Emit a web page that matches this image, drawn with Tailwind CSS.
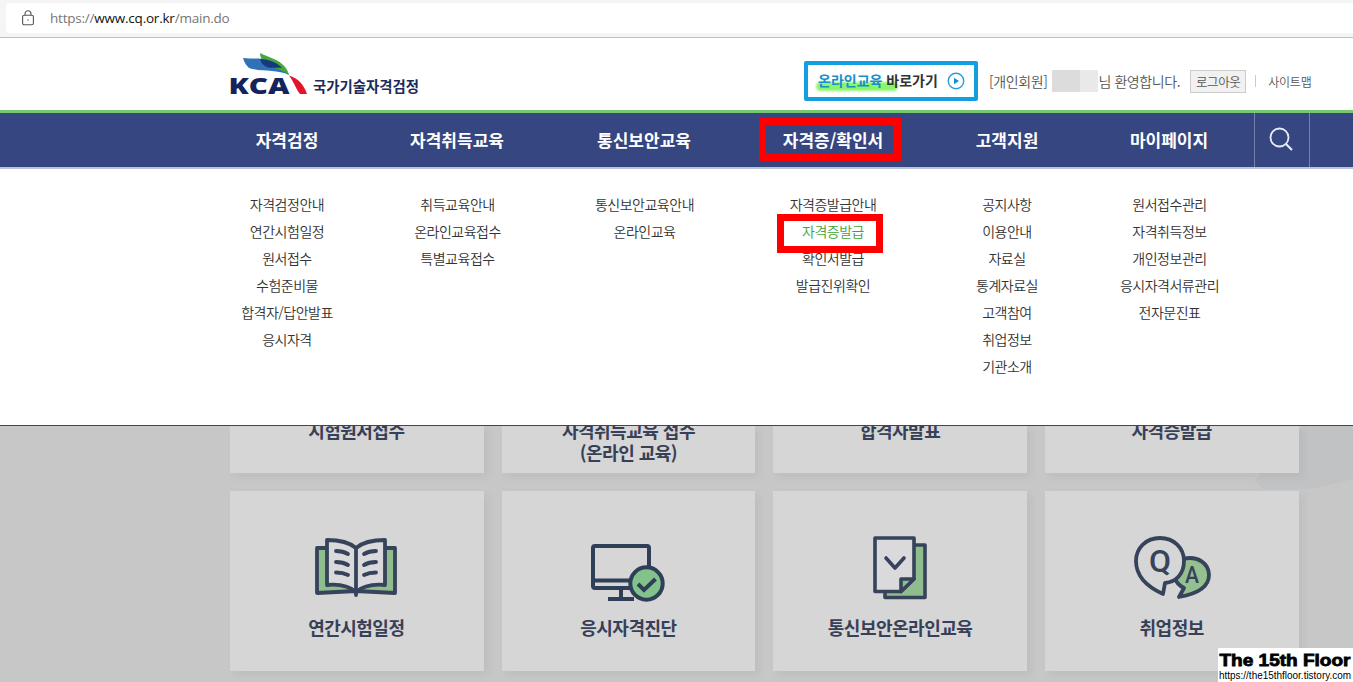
<!DOCTYPE html>
<html lang="ko">
<head>
    <meta charset="UTF-8">
    <meta name="viewport" content="width=device-width, initial-scale=1.0">
    <title>KCA 국가기술자격검정</title>
    <script src="https://cdn.jsdelivr.net/npm/@tailwindcss/browser@4"></script>
</head>
<body class="w-[1353px] h-[682px] overflow-hidden relative bg-white font-['Noto_Sans_CJK_KR',sans-serif] text-[#333] flex flex-col whitespace-nowrap">
    <!-- Address bar -->
    <div class="h-[38px] shrink-0 bg-[#f5f5f5] border-b border-[#bfbfbf] pt-[3px] pb-1 pl-1.5">
        <div class="h-full bg-white rounded-l flex items-center pl-4 font-['Open_Sans',sans-serif] text-[13.5px] tracking-[-0.22px] text-[#767676]">
            <svg class="w-3 h-4 mr-4" viewBox="0 0 12 16" fill="none" stroke="#555" stroke-width="1.1">
                <rect x="0.6" y="5.2" width="10.8" height="9.6" rx="1.6"/>
                <path d="M3 5.2V3.7a3 3 0 0 1 6 0v1.5"/>
                <circle cx="6" cy="10" r="0.7" fill="#555" stroke="none"/>
            </svg>
            <span>https://<span class="text-[#111]">www.cq.or.kr</span>/main.do</span>
        </div>
    </div>

    <!-- Header -->
    <header class="h-[72px] shrink-0 flex items-start pl-[229px]">
        <svg class="w-[192px] h-[48px] mt-3" viewBox="0 0 192 48">
            <path d="M14 8C22 9 32 8 40 10C50 13 57 18 60 25C48 19 32 22 20 18C17 15 15 12 14 8Z" fill="#2f72b8"/>
            <path d="M31 3C39 7 48 9 53 14C57 17 59 21 60 25C53 19 43 18 37 14C33 11 31 7 31 3Z" fill="#44a83c"/>
            <path d="M31 9C38 9 48 12 53 18C47 17 40 19 36 16C33 14 32 12 31 9Z" fill="#17387c"/>
            <path d="M60 25.500C69 28 75 35 78 44H71C67 39 65 32 60 25.500Z" fill="#e4142c"/>
            <text x="-0.500" y="44" textLength="61" lengthAdjust="spacingAndGlyphs" font-family="Open Sans, sans-serif" font-weight="800" font-size="23" fill="#14235c">KCA</text>
            <text x="84" y="42" textLength="106" lengthAdjust="spacingAndGlyphs" font-family="Noto Sans CJK KR, sans-serif" font-weight="700" font-size="15" fill="#1c2a5e">국가기술자격검정</text>
        </svg>
        <a class="ml-[383px] mt-[23px] w-[174px] h-[40px] border-4 border-[#119fdf] rounded-xs flex items-center pl-[10px] text-[14px] font-bold">
            <span class="relative -mt-0.5"><span class="absolute -left-0.5 top-[12px] w-[82px] h-[9px] rounded-full bg-[#8bf56a] blur-[1px]"></span><span class="relative"><span class="text-[#178fcb]">온라인교육</span> 바로가기</span></span>
            <svg class="w-[18px] h-[18px] ml-[9px]" viewBox="0 0 18 18">
                <circle cx="9" cy="9" r="7.700" fill="none" stroke="#2b9bd9" stroke-width="1.400"/>
                <path d="M7 5.800L12 9L7 12.200Z" fill="#178fcb"/>
            </svg>
        </a>
        <div class="flex items-center mt-[31px] h-6 ml-[11px] text-[14px] text-[#555] font-[350] tracking-[-0.4px]">
            <span>[개인회원]</span>
            <span class="flex ml-[5px] h-[22px]"><span class="w-7 bg-[#dcdcdc]"></span><span class="w-[18px] bg-[#e9e9e9]"></span></span>
            <span>님 환영합니다.</span>
            <a class="ml-[10px] w-[56px] h-[23px] bg-[#f1f1f1] border border-[#ccc] text-[12.5px] text-center leading-[21px]">로그아웃</a>
            <span class="w-px h-3 bg-[#ccc] ml-[9px] mr-3"></span>
            <a class="text-[12px] mt-0.5 tracking-[-0.2px]">사이트맵</a>
        </div>
    </header>

    <!-- Main menu -->
    <nav class="h-[59px] shrink-0 bg-[#354680] border-t-3 border-t-[#76c76f] border-b-2 border-b-[#bcc2d8] flex pl-[222px] text-white text-[17px] font-bold leading-[54px] text-center">
        <a class="w-[130px]">자격검정</a>
        <a class="w-[210px]">자격취득교육</a>
        <a class="w-[164px]">통신보안교육</a>
        <a class="w-[214px] relative">자격증/확인서<span class="absolute left-[33px] top-[5px] w-[142px] h-[43px] border-7 border-[#f00]"></span></a>
        <a class="w-[134px]">고객지원</a>
        <a class="w-[190px] -mr-[10px]">마이페이지</a>
        <a class="w-[56px] border-x border-[#7681aa] flex items-center justify-center pr-0.5">
            <svg class="w-6 h-6 -mt-0.5" viewBox="0 0 24 24" fill="none" stroke="#e8ebf5" stroke-width="1.800">
                <circle cx="10.500" cy="10.500" r="9"/>
                <path d="M17 17L23 23" stroke-width="2.200"/>
            </svg>
        </a>
    </nav>

    <!-- Sub menu -->
    <div class="h-[257px] shrink-0 border-b border-[#33467c] flex pl-[222px] pt-[22px] text-[14px] tracking-[-0.5px] leading-[27px] font-[350] text-center">
        <ul class="w-[130px]">
            <li>자격검정안내</li>
            <li>연간시험일정</li>
            <li>원서접수</li>
            <li>수험준비물</li>
            <li>합격자/답안발표</li>
            <li>응시자격</li>
        </ul>
        <ul class="w-[211px]">
            <li>취득교육안내</li>
            <li>온라인교육접수</li>
            <li>특별교육접수</li>
        </ul>
        <ul class="w-[163px]">
            <li>통신보안교육안내</li>
            <li>온라인교육</li>
        </ul>
        <ul class="w-[214px]">
            <li>자격증발급안내</li>
            <li class="relative text-[#3fa535]">자격증발급<span class="absolute left-[51px] -top-[4px] w-[106px] h-[39px] border-7 border-[#f00]"></span></li>
            <li>확인서발급</li>
            <li>발급진위확인</li>
        </ul>
        <ul class="w-[134px]">
            <li>공지사항</li>
            <li>이용안내</li>
            <li>자료실</li>
            <li>통계자료실</li>
            <li>고객참여</li>
            <li>취업정보</li>
            <li>기관소개</li>
        </ul>
        <ul class="w-[191px]">
            <li>원서접수관리</li>
            <li>자격취득정보</li>
            <li>개인정보관리</li>
            <li>응시자격서류관리</li>
            <li>전자문진표</li>
        </ul>
    </div>

    <!-- Quick links, dimmed behind the open menu -->
    <main class="relative h-[256px] overflow-hidden bg-[#c7c7c7] pl-[230px] text-[18px] leading-[22px] tracking-[-0.5px] font-bold text-[#384057] text-center">
        <svg class="absolute right-0 top-0 w-[110px] h-[70px]" viewBox="0 0 110 70">
            <path d="M12 54L60 0H110V53C92 58 74 63 56 63H20Z" fill="#c0c2c4"/>
        </svg>
        <div class="relative w-[1068.500px] grid grid-cols-4 grid-rows-[47px_180px] gap-[18px]">
            <div class="bg-[#d6d6d6] shadow-[4px_4px_8px_rgba(0,0,0,0.05)] overflow-hidden"><p class="-mt-[7px] pr-px">시험원서접수</p></div>
            <div class="bg-[#d6d6d6] shadow-[4px_4px_8px_rgba(0,0,0,0.05)] overflow-hidden"><p class="-mt-[7px]">자격취득교육 접수<br>(온라인 교육)</p></div>
            <div class="bg-[#d6d6d6] shadow-[4px_4px_8px_rgba(0,0,0,0.05)] overflow-hidden"><p class="-mt-[7px]">합격자발표</p></div>
            <div class="bg-[#d6d6d6] shadow-[4px_4px_8px_rgba(0,0,0,0.05)] overflow-hidden"><p class="-mt-[7px]">자격증발급</p></div>

            <div class="bg-[#d6d6d6] shadow-[4px_4px_8px_rgba(0,0,0,0.05)] flex flex-col items-center pt-[43px] pr-px">
                <svg class="w-[84px] h-[66px]" viewBox="0 0 84 66" fill="none" stroke="#36435b" stroke-width="3.800" stroke-linejoin="round" stroke-linecap="round">
                    <path d="M3 14H81V59L42 57L3 59Z" fill="#8fbd8d"/>
                    <path d="M13 6C25 6 35 8 42 14C49 8 59 6 71 6V51C60 50 49 52 42 58C35 52 24 50 13 51Z" fill="#dadadd"/>
                    <path d="M42 14V61"/>
                    <path d="M22 17Q29 17 34 20M22 28Q29 28 34 31M22 38.500Q29 38.500 34 41M62 17Q55 17 50 20M62 28Q55 28 50 31M62 38.500Q55 38.500 50 41"/>
                </svg>
                <p class="mt-[16px]">연간시험일정</p>
            </div>
            <div class="bg-[#d6d6d6] shadow-[4px_4px_8px_rgba(0,0,0,0.05)] flex flex-col items-center pt-[43px]">
                <svg class="w-[76px] h-[68px]" viewBox="0 0 76 68" fill="none" stroke="#2f3f58" stroke-width="4">
                    <rect x="3" y="12" width="56" height="42" rx="2"/>
                    <path d="M3 46.500H42M31 54V64M18 65H44"/>
                    <circle cx="56.500" cy="49.500" r="16.200" fill="#83c28b"/>
                    <path d="M48 50L54 56L65.500 45"/>
                </svg>
                <p class="mt-[14px]">응시자격진단</p>
            </div>
            <div class="bg-[#d6d6d6] shadow-[4px_4px_8px_rgba(0,0,0,0.05)] flex flex-col items-center pt-[43px]">
                <svg class="w-[56px] h-[66px]" viewBox="0 0 56 66" fill="none" stroke="#36435b" stroke-width="3.600" stroke-linejoin="round">
                    <path d="M13 11H53V63.500H13Z" fill="#8fbd8d"/>
                    <path d="M3 4H42V45L29 57.500H3Z" fill="#dadadd"/>
                    <path d="M29 57.500V45H42Z" fill="#8fbd8d"/>
                    <path d="M14 24L23 34L32 24" stroke-linecap="round"/>
                </svg>
                <p class="mt-[16px]">통신보안온라인교육</p>
            </div>
            <div class="bg-[#d6d6d6] shadow-[4px_4px_8px_rgba(0,0,0,0.05)] flex flex-col items-center pt-[43px]">
                <svg class="w-[78px] h-[66px]" viewBox="0 0 78 66" fill="none" stroke="#36435b" stroke-width="3.800" stroke-linejoin="round">
                    <path d="M50 25C65 21 76 30 76 41C76 54 63 60 46 63L51 54C47 52 43 48 42 44Z" fill="#93c08e"/>
                    <path d="M27 4C41 4 51 14 51 27C51 40 43 48 32 49L30 60C19 55 3 45 3 27C3 14 13 4 27 4Z" fill="#d6d6d6"/>
                    <text x="27" y="38" text-anchor="middle" letter-spacing="0" font-family="Roboto, sans-serif" font-weight="500" font-size="32" fill="#36435b" stroke="none" textLength="22" lengthAdjust="spacingAndGlyphs">Q</text>
                    <text x="59" y="49" text-anchor="middle" letter-spacing="0" font-family="Roboto, sans-serif" font-weight="500" font-size="24" fill="#36435b" stroke="none" textLength="14" lengthAdjust="spacingAndGlyphs">A</text>
                </svg>
                <p class="mt-[16px]">취업정보</p>
            </div>
        </div>
    </main>

    <!-- Blog watermark -->
    <svg class="absolute right-0 bottom-0 w-[135px] h-[34px] bg-white" viewBox="0 0 135 34">
        <text x="1.500" y="18" textLength="131" lengthAdjust="spacingAndGlyphs" font-family="Liberation Sans, sans-serif" font-weight="700" font-size="16.500" fill="#000" stroke="#000" stroke-width="0.800">The 15th Floor</text>
        <text x="1" y="31" textLength="132" lengthAdjust="spacingAndGlyphs" font-family="Liberation Sans, sans-serif" font-size="11" fill="#000">https://the15thfloor.tistory.com</text>
    </svg>
</body>
</html>
